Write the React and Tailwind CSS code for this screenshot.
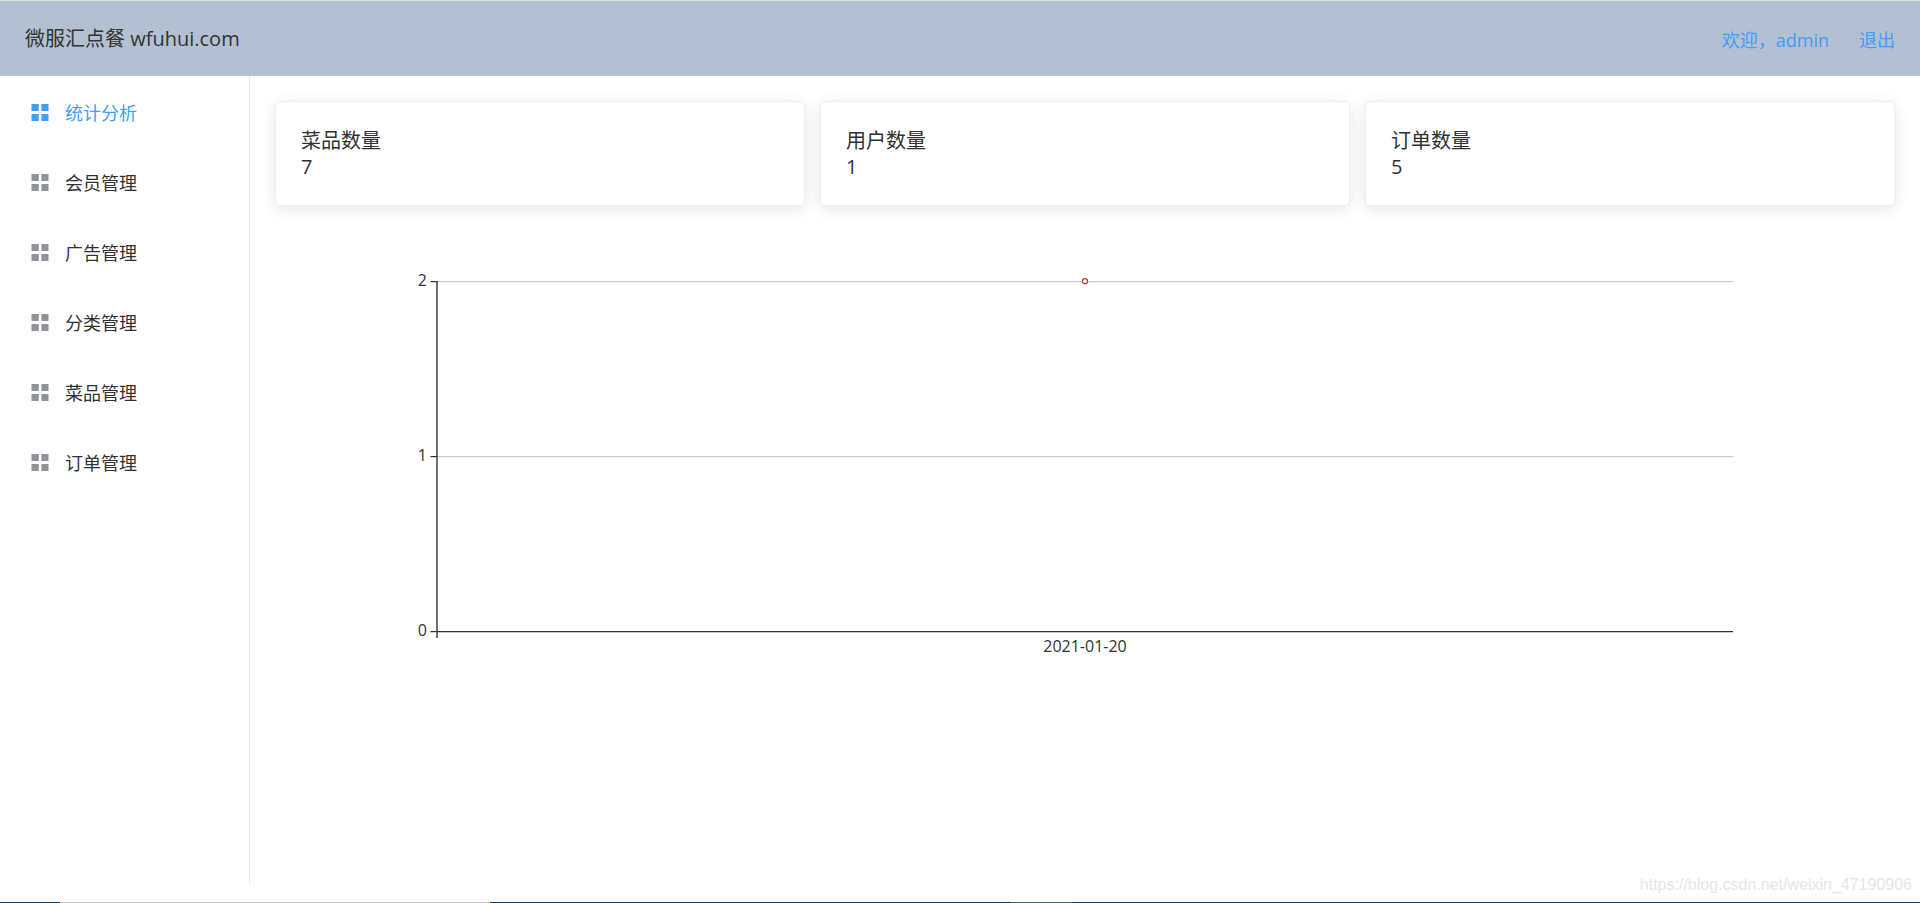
import React, { useState } from 'react';

const MENU = ['统计分析', '会员管理', '广告管理', '分类管理', '菜品管理', '订单管理'];

const STATS = [
  { label: '菜品数量', value: 7 },
  { label: '用户数量', value: 1 },
  { label: '订单数量', value: 5 },
];

// =============================================
// HEADER
// =============================================
function Header() {
  return (
    <header className="flex h-[76px] items-center justify-between border-t border-[#d9dbde] bg-[#b3c0d1] px-[25px]">
      <h1 className="text-xl text-[#333]">微服汇点餐 wfuhui.com</h1>
      <nav className="flex gap-[30px] pt-0.5 text-lg text-[#409eff]">
        <a href="#profile">欢迎，admin</a>
        <a href="#logout">退出</a>
      </nav>
    </header>
  );
}

// =============================================
// SIDEBAR
// =============================================
function MenuIcon() {
  return (
    <svg width="18" height="18" viewBox="0 0 18 18" fill="currentColor" aria-hidden="true">
      <rect x="0.5" y="0" width="7.3" height="7" />
      <rect x="10.4" y="0" width="7.1" height="7" />
      <rect x="0.5" y="10" width="7.3" height="7" />
      <rect x="10.4" y="10" width="7.1" height="7" />
    </svg>
  );
}

function Sidebar({ active, onChange }) {
  return (
    <aside className="w-[250px] shrink-0 border-r border-[#e6e6e6]">
      <ul>
        {MENU.map((item) => (
          <li key={item}>
            <button
              onClick={() => onChange(item)}
              className={`flex h-[70px] w-full items-center gap-4 pl-[31px] pt-1 text-left text-lg ${
                item === active ? 'text-[#409eff]' : 'text-[#303133]'
              }`}
            >
              <span className={item === active ? 'text-[#409eff]' : 'text-[#909399]'}>
                <MenuIcon />
              </span>
              {item}
            </button>
          </li>
        ))}
      </ul>
    </aside>
  );
}

// =============================================
// STATS + CHART
// =============================================
function StatCard({ label, value }) {
  return (
    <div className="rounded-[5px] border border-[#ebeef5] bg-white px-[25px] pt-[26px] pb-[25px] text-xl leading-[26px] text-[#303133] shadow-[0_3px_15px_0_rgba(0,0,0,0.1)]">
      <p>{label}</p>
      <p>{value}</p>
    </div>
  );
}

function OrderChart() {
  const rows = [
    { value: 2, y: 75.6 },
    { value: 1, y: 250.6 },
    { value: 0, y: 425.6 },
  ];

  return (
    <svg className="h-[500px] w-full" role="img" aria-label="订单数量">
      {rows.map((row) => (
        <g key={row.value}>
          <line x1="10%" x2="90%" y1={row.y} y2={row.y} stroke={row.value ? '#ccc' : '#333'} strokeWidth={row.value ? 1.25 : 1.4} />
          <svg x="10%" overflow="visible">
            <line x1="-6.5" x2="0" y1={row.y} y2={row.y} stroke="#333" strokeWidth="1.25" />
            <text x="-10" y={row.y + 4} textAnchor="end" fill="#333" className="text-base">
              {row.value}
            </text>
          </svg>
        </g>
      ))}
      <line x1="10%" x2="10%" y1="75" y2="432" stroke="#333" strokeWidth="1.4" />
      <circle cx="50%" cy="75.2" r="2.5" fill="#fff" stroke="#c23531" strokeWidth="1.25" />
      <text x="50%" y="446" textAnchor="middle" fill="#333" className="text-base">
        2021-01-20
      </text>
    </svg>
  );
}

export default function App() {
  const [active, setActive] = useState('统计分析');

  return (
    <div className="relative flex min-h-screen flex-col bg-white font-['Open_Sans','Noto_Sans_CJK_SC',sans-serif]">
      <Header />
      <div className="mb-[19px] flex flex-1">
        <Sidebar active={active} onChange={setActive} />
        <main className="min-w-0 flex-1 p-[25px]">
          <div className="grid grid-cols-3 gap-[15px]">
            {STATS.map((s) => (
              <StatCard key={s.label} label={s.label} value={s.value} />
            ))}
          </div>
          <OrderChart />
        </main>
      </div>
      <p className="absolute right-2 bottom-1.5 font-['Liberation_Sans',sans-serif] text-base text-[#e6e6e6]">
        https://blog.csdn.net/weixin_47190906
      </p>
      <div className="absolute inset-x-0 bottom-0 flex h-px bg-[#1f3547]">
        <span className="ml-[60px] w-[430px] bg-[#c3c5c3]" />
        <span className="ml-[521px] w-[61px] bg-[#4d6070]" />
      </div>
    </div>
  );
}
